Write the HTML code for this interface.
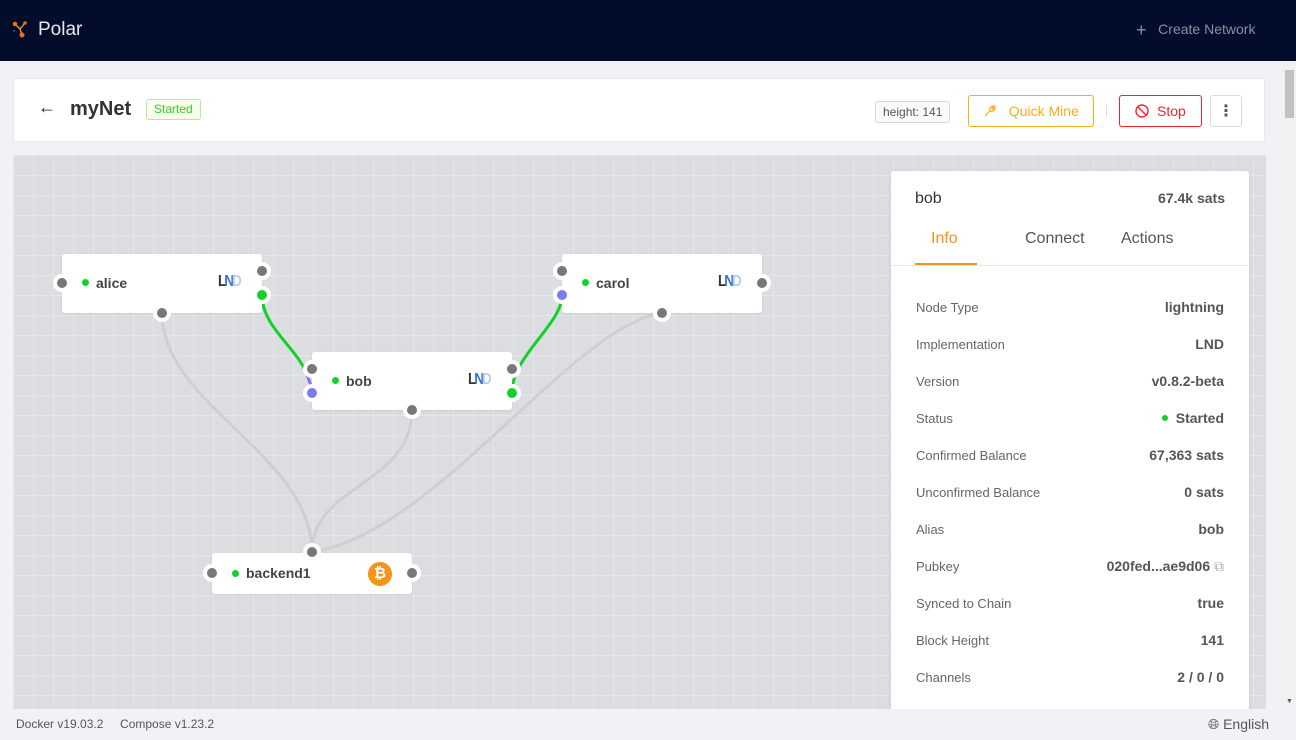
<!DOCTYPE html>
<html><head><meta charset="utf-8"><style>
*{box-sizing:border-box;margin:0;padding:0}
body{width:1296px;height:740px;overflow:hidden;background:#f0f2f5;font-family:"Liberation Sans","DejaVu Sans",sans-serif;color:#333;position:relative}
.abs{position:absolute}
.hdr{left:0;top:0;width:1296px;height:61px;background:#020d2b}
.card{left:13px;top:78px;width:1252px;height:64px;background:#fff;border:1px solid #e8e8e8}
.canvas{left:13px;top:155px;width:1253px;height:554px;background-color:#dcdde1;
background-image:linear-gradient(90deg,rgba(255,255,255,.28) 1px,transparent 1px),linear-gradient(rgba(255,255,255,.28) 1px,transparent 1px);background-size:20px 20px;background-position:0 0;overflow:hidden}
.node{position:absolute;background:#fff;border-radius:3px;box-shadow:0 1px 3px rgba(0,0,0,.08)}
.nm{position:absolute;font-weight:bold;font-size:14px;color:#444}
.dot{position:absolute;width:7px;height:7px;border-radius:50%;background:#13d12b}
.port{position:absolute;width:18px;height:18px;border-radius:50%;background:#fff;margin:-9px 0 0 -9px}
.port i{position:absolute;left:4px;top:4px;width:10px;height:10px;border-radius:50%;background:#777}
.lnd{position:absolute;font-weight:bold;font-size:16px;letter-spacing:-2.5px;font-family:"Liberation Sans Narrow","Liberation Sans",sans-serif;transform:scaleX(.85);transform-origin:left}
.side{left:891px;top:171px;width:358px;height:560px;background:#fff;border-radius:3px;box-shadow:0 1px 4px rgba(0,0,0,.08)}
.row{position:absolute;left:25px;width:308px;font-size:13px;color:#666}
.row b{position:absolute;right:0;top:-1px;font-size:14px;color:#555}
.btn{position:absolute;height:32px;border-radius:3px;font-size:14px;display:flex;align-items:center;justify-content:center}
</style></head><body>
<div class="abs hdr">
 <svg class="abs" style="left:11px;top:20px" width="18" height="18" viewBox="0 0 18 18"><line x1="4" y1="4" x2="9" y2="9" stroke="#f7a21b" stroke-width="1.3"/><line x1="14" y1="3" x2="9" y2="9" stroke="#f7a21b" stroke-width="1.3"/><line x1="9" y1="9" x2="11" y2="15" stroke="#f7a21b" stroke-width="1.3"/><circle cx="4" cy="4" r="2.3" fill="#f36b12"/><circle cx="14" cy="3" r="1.8" fill="#f36b12"/><circle cx="11" cy="15" r="2.5" fill="#f36b12"/><circle cx="3" cy="11" r="1" fill="#4444aa"/></svg>
 <div class="abs" style="left:38px;top:19px;font-size:19px;color:#e8e8ee">Polar</div>
 <div class="abs" style="left:1136px;top:20px;font-size:14px;color:#8a8fa3"><span style="font-size:18px;vertical-align:-2px">+</span>&nbsp;&nbsp; Create Network</div>
</div>
<div class="abs card">
 <div class="abs" style="left:24px;top:18px;font-size:18px;color:#222">&#8592;</div>
 <div class="abs" style="left:56px;top:19px;font-size:20px;font-weight:bold;color:#333">myNet</div>
 <div class="abs" style="left:132px;top:20px;height:21px;padding:0 7px;border:1px solid #b7eb8f;background:#f6ffed;color:#33d12b;font-size:12px;line-height:19px;border-radius:3px">Started</div>
 <div class="abs" style="left:861px;top:22px;height:22px;padding:0 7px;border:1px solid #d9d9d9;background:#fafafa;font-size:12px;line-height:20px;border-radius:3px;color:#555">height: 141</div>
 <div class="btn" style="left:954px;top:16px;width:126px;border:1px solid #faad14;color:#faad14"><svg width="14" height="14" viewBox="0 0 14 14"><path d="M2 12 L7 7 M7 7 C6 4 8 2 11 2 L9 4 L10 5 L12 3 C12 6 10 8 7 7" fill="none" stroke="#faad14" stroke-width="1.2"/></svg>&nbsp;&nbsp; Quick Mine</div>
 <div class="abs" style="left:1092px;top:26px;width:1px;height:12px;background:#ddd"></div>
 <div class="btn" style="left:1105px;top:16px;width:83px;border:1px solid #f5222d;color:#f5222d"><svg width="14" height="14" viewBox="0 0 14 14"><circle cx="7" cy="7" r="6" fill="none" stroke="#f5222d" stroke-width="1.4"/><line x1="3" y1="3" x2="11" y2="11" stroke="#f5222d" stroke-width="1.4"/></svg>&nbsp; Stop</div>
 <div class="btn" style="left:1196px;top:16px;width:32px;border:1px solid #d9d9d9;color:#555;font-size:16px;font-weight:bold">&#8942;</div>
</div>
<div class="abs canvas">
 <svg class="abs" style="left:0;top:0" width="1253" height="554">
  <g fill="none" stroke="#cfcfd2" stroke-width="3">
   <path d="M149 158 C149 250 299 300 299 397"/>
   <path d="M399 255 C399 330 299 330 299 397"/>
   <path d="M649 158 C560 170 420 380 299 397"/>
  </g>
  <path d="M249 140 C249 170 280 190 292 215" fill="none" stroke="#13d12b" stroke-width="3"/>
  <path d="M292 215 C296 225 299 232 299 238" fill="none" stroke="#7b7bf0" stroke-width="3"/>
  <path d="M499 238 C499 200 549 170 549 140" fill="none" stroke="#13d12b" stroke-width="3"/>
 </svg>
 <div class="node" style="left:49px;top:99px;width:200px;height:59px"></div>
 <div class="node" style="left:299px;top:197px;width:200px;height:58px"></div>
 <div class="node" style="left:549px;top:99px;width:200px;height:59px"></div>
 <div class="node" style="left:199px;top:398px;width:200px;height:41px"></div>
</div>
<div class="dot abs" style="left:82px;top:279px"></div><div class="nm" style="left:96px;top:275px">alice</div>
<div class="lnd" style="left:218px;top:273px"><span style="color:#333">L</span><span style="color:#3c6fd1">N</span><span style="color:#b5cdf0">D</span></div>
<div class="dot abs" style="left:332px;top:377px"></div><div class="nm" style="left:346px;top:373px">bob</div>
<div class="lnd" style="left:468px;top:371px"><span style="color:#333">L</span><span style="color:#3c6fd1">N</span><span style="color:#b5cdf0">D</span></div>
<div class="dot abs" style="left:582px;top:279px"></div><div class="nm" style="left:596px;top:275px">carol</div>
<div class="lnd" style="left:718px;top:273px"><span style="color:#333">L</span><span style="color:#3c6fd1">N</span><span style="color:#b5cdf0">D</span></div>
<div class="dot abs" style="left:232px;top:570px"></div><div class="nm" style="left:246px;top:565px">backend1</div>
<div class="abs" style="left:368px;top:562px;width:24px;height:24px;border-radius:50%;background:#f7931a;color:#fff;font-weight:bold;font-size:15px;text-align:center;line-height:24px">&#8383;</div>
<div class="port" style="left:62px;top:283px"><i></i></div>
<div class="port" style="left:262px;top:271px"><i></i></div>
<div class="port" style="left:262px;top:295px"><i style="background:#13d12b"></i></div>
<div class="port" style="left:162px;top:313px"><i></i></div>
<div class="port" style="left:312px;top:369px"><i></i></div>
<div class="port" style="left:312px;top:393px"><i style="background:#7b7bf0"></i></div>
<div class="port" style="left:512px;top:369px"><i></i></div>
<div class="port" style="left:512px;top:393px"><i style="background:#13d12b"></i></div>
<div class="port" style="left:412px;top:410px"><i></i></div>
<div class="port" style="left:562px;top:271px"><i></i></div>
<div class="port" style="left:562px;top:295px"><i style="background:#7b7bf0"></i></div>
<div class="port" style="left:762px;top:283px"><i></i></div>
<div class="port" style="left:662px;top:313px"><i></i></div>
<div class="port" style="left:312px;top:552px"><i></i></div>
<div class="port" style="left:212px;top:573px"><i></i></div>
<div class="port" style="left:412px;top:573px"><i></i></div>
<div class="abs side">
 <div class="abs" style="left:24px;top:19px;font-size:16px;color:#333">bob</div>
 <div class="abs" style="right:24px;top:19px;font-size:14px;font-weight:bold;color:#555">67.4k sats</div>
 <div class="abs" style="left:40px;top:59px;font-size:16px;color:#f7921a">Info</div>
 <div class="abs" style="left:134px;top:59px;font-size:16px;color:#555">Connect</div>
 <div class="abs" style="left:230px;top:59px;font-size:16px;color:#555">Actions</div>
 <div class="abs" style="left:24px;top:92px;width:62px;height:3px;background:#f7921a"></div>
 <div class="abs" style="left:0;top:94px;width:358px;height:1px;background:#e8e8e8"></div>
 <div class="row" style="top:129px">Node Type<b>lightning</b></div>
 <div class="row" style="top:166px">Implementation<b>LND</b></div>
 <div class="row" style="top:203px">Version<b>v0.8.2-beta</b></div>
 <div class="row" style="top:240px">Status<b><span style="display:inline-block;width:6px;height:6px;border-radius:50%;background:#13d12b;vertical-align:2px"></span>&nbsp; Started</b></div>
 <div class="row" style="top:277px">Confirmed Balance<b>67,363 sats</b></div>
 <div class="row" style="top:314px">Unconfirmed Balance<b>0 sats</b></div>
 <div class="row" style="top:351px">Alias<b>bob</b></div>
 <div class="row" style="top:388px">Pubkey<b>020fed...ae9d06 <span style="color:#aaa;font-weight:normal">&#10697;</span></b></div>
 <div class="row" style="top:425px">Synced to Chain<b>true</b></div>
 <div class="row" style="top:462px">Block Height<b>141</b></div>
 <div class="row" style="top:499px">Channels<b>2 / 0 / 0</b></div>
</div>
<div class="abs" style="left:0;top:709px;width:1296px;height:31px;background:#f0f2f5"></div>
<div class="abs" style="left:16px;top:717px;font-size:12px;color:#555">Docker v19.03.2 &nbsp;&nbsp;&nbsp; Compose v1.23.2</div>
<div class="abs" style="left:1208px;top:716px;font-size:14px;color:#555"><span style="font-size:14px">&#127760;&#xFE0E;</span> English</div>
<div class="abs" style="left:1282px;top:61px;width:14px;height:648px;background:#f1f1f1"></div>
<div class="abs" style="left:1285px;top:70px;width:9px;height:48px;background:#c1c1c1"></div>
<div class="abs" style="left:1286px;top:698px;font-size:7px;color:#555">&#9660;</div>
</body></html>
